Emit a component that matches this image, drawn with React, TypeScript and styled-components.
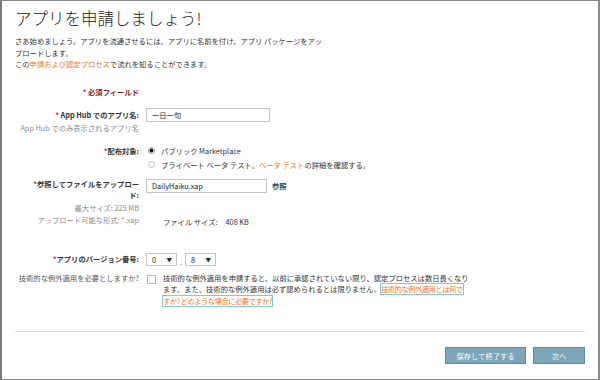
import * as React from "react";
import styled, { createGlobalStyle } from "styled-components";

const GlobalStyle = createGlobalStyle`
  html, body {
    margin: 0;
    padding: 0;
    background: #ffffff;
  }
  body {
    font-family: "Noto Sans CJK JP", "Noto Sans", sans-serif;
    color: #333333;
  }
`;

const App = () => {
  return (
    <>
      <GlobalStyle />
      <Frame>
        <Title>アプリを申請しましょう!</Title>
        <Intro>
          さあ始めましょう。アプリを流通させるには、アプリに名前を付け、アプリ パッケージをアップロードします。
          <br />
          この<Orange>申請および認定プロセス</Orange>で流れを知ることができます。
        </Intro>

        <Row $top={14}>
          <Label $tone="required">
            <Star>*</Star> 必須フィールド
          </Label>
        </Row>

        <Row $top={9}>
          <LabelCell>
            <Label $bold>
              <Star>*</Star> App Hub でのアプリ名:
            </Label>
            <SubLabel>App Hub でのみ表示されるアプリ名</SubLabel>
          </LabelCell>
          <Field>
            <TextBox $width={124}>一日一句</TextBox>
          </Field>
        </Row>

        <Row $top={10}>
          <Label $bold>
            <Star>*</Star>配布対象:
          </Label>
          <Field>
            <Choice>
              <Radio $checked />
              <span>パブリック Marketplace</span>
            </Choice>
            <Choice>
              <Radio />
              <span>
                プライベート ベータ テスト。<Orange>ベータ テスト</Orange>の詳細を確認する。
              </span>
            </Choice>
          </Field>
        </Row>

        <Row $top={7}>
          <LabelCell>
            <Label $bold $lh={11.5} $narrow>
              <Star>*</Star>参照してファイルをアップロード:
            </Label>
            <SubLabel>最大サイズ: 225 MB</SubLabel>
            <SubLabel>アップロード可能な形式: *.xap</SubLabel>
          </LabelCell>
          <Field>
            <Inline>
              <TextBox $width={121}>DailyHaiku.xap</TextBox>
              <Browse>参照</Browse>
            </Inline>
            <FileSize>
              ファイル サイズ:<Value>408 KB</Value>
            </FileSize>
          </Field>
        </Row>

        <Row $top={25}>
          <Label $bold $lh={13}>
            <Star>*</Star>アプリのバージョン番号:
          </Label>
          <Inline>
            <Select>
              <span>0</span>
              <Arrow>▼</Arrow>
            </Select>
            <Dot>.</Dot>
            <Select>
              <span>8</span>
              <Arrow>▼</Arrow>
            </Select>
          </Inline>
        </Row>

        <Row $top={6}>
          <Label $tone="plain" $lh={11.5}>
            技術的な例外適用を必要としますか?
          </Label>
          <CheckRow>
            <Check />
            <CheckText>
              技術的な例外適用を申請すると、以前に承認されていない限り、認定プロセスは数日長くなります。また、技術的な例外適用は必ず認められるとは限りません。
              <HelpLink>技術的な例外適用とは何ですか? どのような場合に必要ですか?</HelpLink>
            </CheckText>
          </CheckRow>
        </Row>

        <Divider />

        <Actions>
          <Button>保存して終了する</Button>
          <Button $narrow>次へ</Button>
        </Actions>
      </Frame>
    </>
  );
};

const Frame = styled.div`
  width: 600px;
  height: 380px;
  box-sizing: border-box;
  border-top: 1px solid #8a8a8a;
  border-left: 2px solid #7a7a7a;
  border-right: 2px solid #8a8a8a;
  border-bottom: 1px solid #8a8a8a;
  padding: 0 13px 0 13px;
  font-size: 7.3px;
`;

const Title = styled.h1`
  margin: 7px 0 0 0;
  font-size: 16.5px;
  line-height: 20px;
  font-weight: 300;
  color: #222222;
`;

const Intro = styled.p`
  margin: 8px 0 0 0;
  max-width: 308px;
  line-height: 11.5px;
  color: #333333;
`;

const Orange = styled.span`
  color: #ec7a1c;
`;

const Row = styled.div<{ $top: number }>`
  display: grid;
  grid-template-columns: 124px 1fr;
  column-gap: 7px;
  align-items: start;
  margin-top: ${(p) => p.$top}px;
`;

const LabelCell = styled.div`
  display: flex;
  flex-direction: column;
  align-items: flex-end;
`;

const Label = styled.div<{
  $bold?: boolean;
  $tone?: "required" | "plain";
  $lh?: number;
  $narrow?: boolean;
}>`
  text-align: right;
  line-height: ${(p) => p.$lh ?? 14}px;
  font-weight: ${(p) => (p.$bold || p.$tone === "required" ? 700 : 400)};
  color: ${(p) =>
    p.$tone === "required" ? "#7d1f1f" : p.$tone === "plain" ? "#555555" : "#333333"};
  max-width: ${(p) => (p.$narrow ? "112px" : "none")};
  margin-left: auto;
`;

const Star = styled.span`
  color: #c8102e;
`;

const SubLabel = styled.div`
  text-align: right;
  line-height: 12px;
  color: #8c8c8c;
`;

const Field = styled.div`
  display: flex;
  flex-direction: column;
`;

const Inline = styled.div`
  display: flex;
  align-items: center;
`;

const TextBox = styled.div<{ $width: number }>`
  width: ${(p) => p.$width}px;
  height: 14px;
  box-sizing: border-box;
  border: 1px solid #c4c4c4;
  padding-left: 5px;
  line-height: 12px;
  color: #222222;
`;

const Browse = styled.span`
  margin-left: 5px;
  font-weight: 700;
  color: #2c4657;
`;

const FileSize = styled.div`
  margin-top: 23px;
  padding-left: 17px;
  line-height: 12px;
  color: #333333;
`;

const Value = styled.span`
  margin-left: 8px;
`;

const Choice = styled.div`
  display: flex;
  align-items: center;
  height: 14px;
  color: #333333;
`;

const Radio = styled.span<{ $checked?: boolean }>`
  width: 7px;
  height: 7px;
  box-sizing: border-box;
  border-radius: 50%;
  border: 1px solid ${(p) => (p.$checked ? "#9a9a9a" : "#c0c0c0")};
  background: ${(p) =>
    p.$checked ? "radial-gradient(circle, #111 0 1.8px, #fff 2.2px)" : "#ffffff"};
  margin: 0 6px 0 2px;
  flex: none;
`;

const Select = styled.div`
  width: 31px;
  height: 13px;
  box-sizing: border-box;
  border: 1px solid #c4c4c4;
  display: flex;
  align-items: center;
  justify-content: space-between;
  padding: 0 4px 0 5px;
  color: #222222;
`;

const Arrow = styled.span`
  font-size: 5.5px;
  color: #222222;
`;

const Dot = styled.span`
  margin: 0 3px;
  padding-top: 4px;
`;

const CheckRow = styled.div`
  display: flex;
  align-items: flex-start;
`;

const Check = styled.span`
  width: 9px;
  height: 9px;
  box-sizing: border-box;
  border: 1px solid #b5b5b5;
  margin: 2px 7px 0 1px;
  flex: none;
`;

const CheckText = styled.div`
  width: 306px;
  line-height: 11.5px;
  color: #333333;
`;

const HelpLink = styled.span`
  color: #ec7a1c;
  letter-spacing: -0.5px;
  outline: 1px solid #82c6e2;
`;

const Divider = styled.hr`
  margin: 24px 0 0 0;
  border: none;
  border-top: 1px solid #dcdcdc;
`;

const Actions = styled.div`
  display: flex;
  justify-content: flex-end;
  gap: 7px;
  margin-top: 15px;
`;

const Button = styled.button<{ $narrow?: boolean }>`
  width: ${(p) => (p.$narrow ? 52 : 81)}px;
  height: 17px;
  box-sizing: border-box;
  border: 1px solid #5e8a9c;
  background: #7da6b8;
  color: #ffffff;
  font-family: "Noto Sans CJK JP", "Noto Sans", sans-serif;
  font-size: 7.3px;
  padding: 0;
`;

export default App;
